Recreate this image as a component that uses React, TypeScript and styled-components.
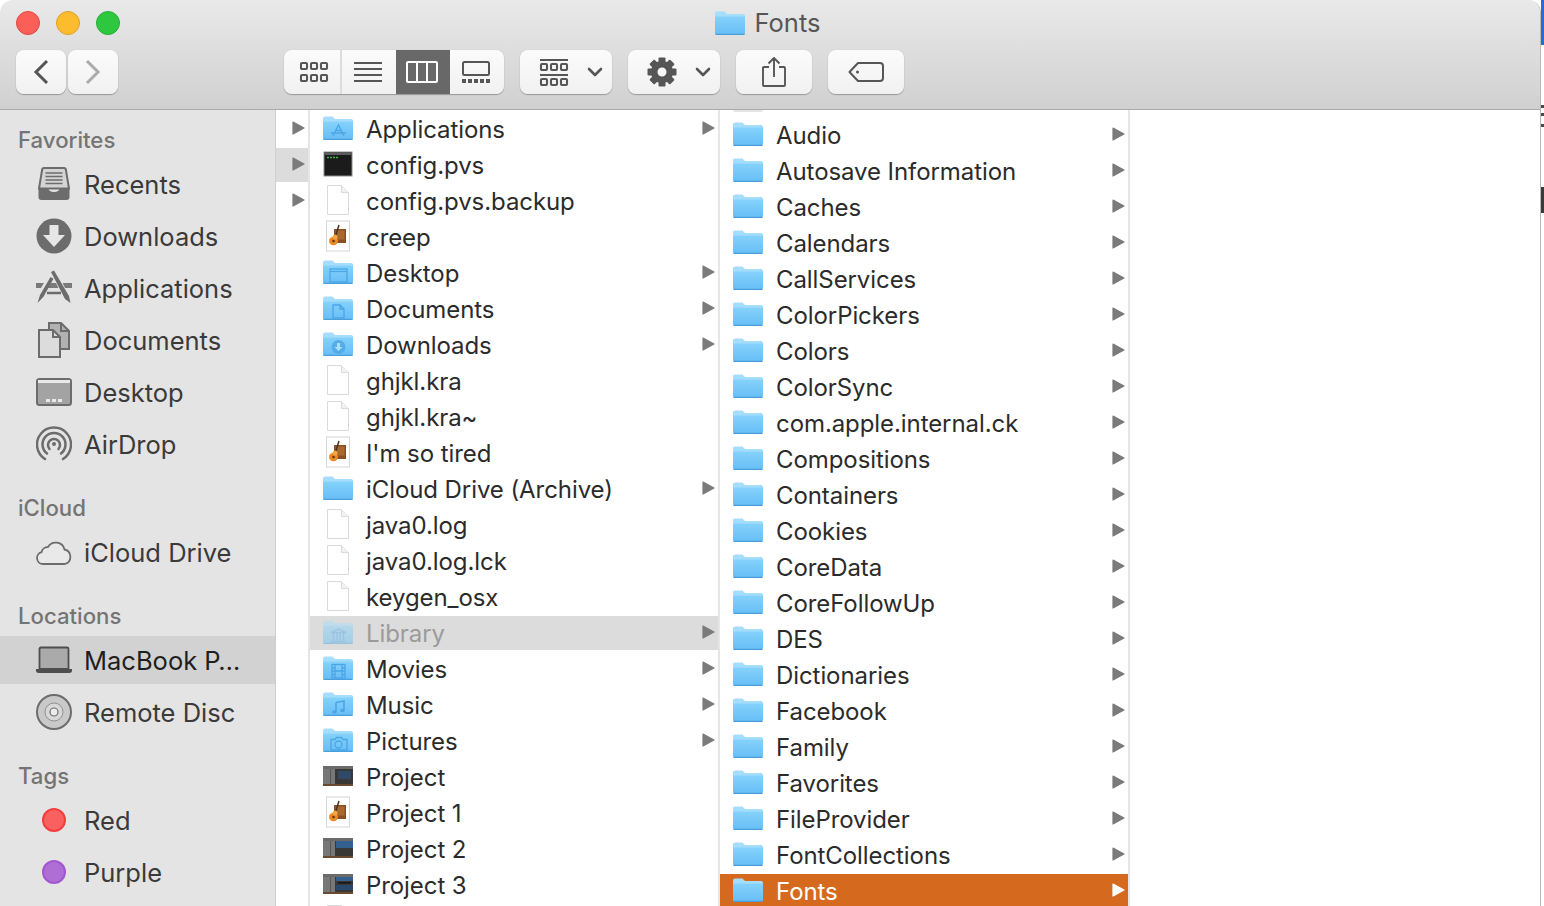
import React from "react";
import styled, { createGlobalStyle } from "styled-components";

const Global = createGlobalStyle`
  html, body { margin: 0; padding: 0; background: #fff; overflow: hidden; }
  * { box-sizing: border-box; }
  body { font-family: Inter, "Noto Sans", "Liberation Sans", sans-serif; }
`;

const Screen = styled.div`
  display: flex;
  width: 1544px;
  height: 906px;
  overflow: hidden;
`;
const Window = styled.div`
  width: 1541px;
  height: 906px;
  display: flex;
  flex-direction: column;
  border-radius: 13px 13px 0 0;
  border-right: 1px solid #b9b9b9;
  overflow: hidden;
`;
const DesktopStrip = styled.div`
  width: 3px;
  display: flex;
  flex-direction: column;
`;
const StripBit = styled.div<{ $h: number; $c: string }>`
  height: ${(p) => p.$h}px;
  background: ${(p) => p.$c};
`;

const Chrome = styled.header`
  height: 110px;
  flex: none;
  background: linear-gradient(#e9e9e9, #d0d0d0);
  border-bottom: 1px solid #ababab;
`;
const TitleRow = styled.div`
  height: 49px;
  display: grid;
  grid-template-columns: 1fr auto 1fr;
  align-items: center;
  padding: 0 16px;
`;
const Lights = styled.div`
  display: flex;
  gap: 16px;
  margin-bottom: 4px;
`;
const Light = styled.span<{ $bg: string; $bd: string }>`
  width: 24px;
  height: 24px;
  border-radius: 50%;
  background: ${(p) => p.$bg};
  border: 1px solid ${(p) => p.$bd};
`;
const Title = styled.div`
  display: flex;
  align-items: center;
  gap: 10px;
  margin: 0 5px 4px 0;
  font-size: 25.5px;
  color: #565656;
`;
const Toolbar = styled.div`
  height: 46px;
  display: flex;
  align-items: center;
  padding-left: 16px;
`;
const Tool = styled.div<{ $w: number; $ml?: number; $pl?: number }>`
  width: ${(p) => p.$w}px;
  height: 44px;
  margin-left: ${(p) => p.$ml ?? 0}px;
  padding-left: ${(p) => p.$pl ?? 0}px;
  flex: none;
  display: flex;
  align-items: center;
  justify-content: center;
  border-radius: 8px;
  background: linear-gradient(#fbfbfb, #f1f1f1);
  box-shadow: 0 1px 1px rgba(0, 0, 0, 0.28), 0 0 1px rgba(0, 0, 0, 0.18);
  color: #565656;
`;
const Segmented = styled(Tool)`
  overflow: hidden;
  justify-content: flex-start;
`;
const Seg = styled.div<{ $w: number; $on?: boolean; $line?: boolean; $pl?: number; $pr?: number }>`
  width: ${(p) => p.$w}px;
  height: 100%;
  padding: 0 ${(p) => p.$pr ?? 0}px 0 ${(p) => p.$pl ?? 0}px;
  display: flex;
  align-items: center;
  justify-content: center;
  background: ${(p) => (p.$on ? "#686868" : "transparent")};
  color: ${(p) => (p.$on ? "#fff" : "#565656")};
  border-right: ${(p) => (p.$line ? "2px solid #dcdcdc" : "none")};
`;
const ToolGap = styled.span`
  width: 18px;
  flex: none;
`;

const Body = styled.main`
  flex: 1;
  min-height: 0;
  display: flex;
  background: #fff;
`;
const Sidebar = styled.nav`
  width: 276px;
  flex: none;
  padding-top: 11px;
  background: #e4e4e4;
  border-right: 1px solid #cfcfcf;
  display: flex;
  flex-direction: column;
  gap: 17px;
`;
const Section = styled.section``;
const SectionTitle = styled.h2`
  margin: 0;
  height: 39px;
  line-height: 38px;
  padding-left: 18px;
  font-size: 22.2px;
  font-weight: 500;
  color: #747474;
`;
const SideRow = styled.div<{ $on?: boolean }>`
  height: 48px;
  margin-bottom: 4px;
  display: flex;
  align-items: center;
  gap: 12px;
  padding-left: 36px;
  font-size: 25.5px;
  color: ${(p) => (p.$on ? "#1f1f1f" : "#3a3a3a")};
  background: ${(p) => (p.$on ? "#d2d2d2" : "transparent")};
  white-space: nowrap;
`;
const Dot = styled.span<{ $bg: string; $bd: string }>`
  width: 24px;
  height: 24px;
  margin: 0 6px;
  border-radius: 50%;
  background: ${(p) => p.$bg};
  border: 2px solid ${(p) => p.$bd};
  flex: none;
`;

const Column = styled.div<{ $w: number; $top?: number }>`
  width: ${(p) => p.$w}px;
  flex: none;
  padding-top: ${(p) => p.$top ?? 0}px;
  border-right: 2px solid #e6e6e6;
  overflow: hidden;
`;
const Filler = styled.div`
  flex: 1;
`;
const Sliver = styled.div`
  width: 30px;
  height: 2px;
  margin: -6px 0 4px 13px;
  background: #e4e4e4;
  border-radius: 0 0 2px 2px;
`;
const ArrowRow = styled.div<{ $on?: boolean }>`
  height: 36px;
  border-top: 2px solid #fff;
  background: ${(p) => (p.$on ? "#dcdcdc" : "transparent")};
  display: flex;
  align-items: center;
  justify-content: flex-end;
  padding: 0 3px 2px 0;
  color: #7b7b7b;
`;
const Row = styled.div<{ $state?: "dim" | "active" }>`
  height: 36px;
  border-top: 2px solid #fff;
  display: flex;
  align-items: center;
  padding: 0 3px 0 13px;
  font-size: 24px;
  letter-spacing: -0.08px;
  white-space: nowrap;
  background: ${(p) =>
    p.$state === "dim" ? "#dcdcdc" : p.$state === "active" ? "#d56a1f" : "transparent"};
  color: ${(p) =>
    p.$state === "dim" ? "#9b9b9b" : p.$state === "active" ? "#fff" : "#2b2b2b"};
`;
const RowIcon = styled.span<{ $dim?: boolean }>`
  width: 32px;
  height: 30px;
  margin-right: 11px;
  margin-top: -2px;
  flex: none;
  display: flex;
  align-items: center;
  opacity: ${(p) => (p.$dim ? 0.45 : 1)};
`;
const RowName = styled.span`
  flex: 1;
  padding-top: 1px;
`;
const RowArrow = styled.span<{ $state?: "dim" | "active" }>`
  display: flex;
  margin-bottom: 3px;
  color: ${(p) => (p.$state === "active" ? "#fff" : "#7b7b7b")};
`;
const ThumbSvg = styled.svg`
  filter: blur(0.7px);
`;
const SideSvg = styled.svg`
  flex: none;
`;

const Arrow = () => (
  <svg width="13" height="14" viewBox="0 0 13 14">
    <path d="M1 1 12 7 1 13Z" fill="currentColor" stroke="currentColor" strokeWidth="1.2" strokeLinejoin="round" />
  </svg>
);

type Glyph = "apps" | "window" | "doc" | "down" | "library" | "film" | "music" | "camera";

const FolderGlyph = ({ g }: { g: Glyph }) => {
  const c = "#4aa6e6";
  const s = { fill: "none", stroke: c, strokeWidth: 1.3 };
  switch (g) {
    case "apps":
      return (
        <g {...s}>
          <path d="M10 20 15.5 9 21 20M8 17h15M12 14.5h7" />
        </g>
      );
    case "window":
      return (
        <g {...s}>
          <rect x="7" y="9" width="17" height="13" />
          <path d="M7 11.5h17" />
        </g>
      );
    case "doc":
      return (
        <g {...s}>
          <path d="M10 9h7l4 4v9H10ZM17 9v4h4" />
        </g>
      );
    case "down":
      return (
        <g>
          <circle cx="15.5" cy="15" r="7" fill={c} opacity="0.8" />
          <path d="M14 11h3v4h2.5l-4 4-4-4H14Z" fill="#a9dffc" />
        </g>
      );
    case "library":
      return (
        <g {...s}>
          <path d="M8 12.5 15.5 9 23 12.5ZM8 21.5h15M10.5 13v7M14 13v7M17 13v7M20.5 13v7" />
        </g>
      );
    case "film":
      return (
        <g {...s}>
          <rect x="9" y="8.5" width="13" height="13.5" />
          <path d="M12 8.5v13.5M19 8.5v13.5M9 12h3M9 15h3M9 18.500h3M19 12h3M19 15h3M19 18.500h3M12 15h7" />
        </g>
      );
    case "music":
      return (
        <g>
          <path d="M13 10.500 21 9v9" fill="none" stroke={c} strokeWidth="1.6" />
          <path d="M13 10.500V20" fill="none" stroke={c} strokeWidth="1.6" />
          <ellipse cx="11.500" cy="20" rx="2.300" ry="1.800" fill={c} />
          <ellipse cx="19.500" cy="18.500" rx="2.300" ry="1.800" fill={c} />
        </g>
      );
    case "camera":
      return (
        <g {...s}>
          <path d="M8 11.500h4l1.500-2h5l1.500 2h4v10.500H8Z" />
          <circle cx="15.500" cy="16.500" r="3.500" />
        </g>
      );
  }
};

const Folder = ({ g, w = 30, h = 24, id }: { g?: Glyph; w?: number; h?: number; id: string }) => (
  <svg width={w} height={h} viewBox="0 0 30 24">
    <defs>
      <linearGradient id={id} x1="0" y1="0" x2="0" y2="1">
        <stop offset="0" stopColor="#85d2fb" />
        <stop offset="1" stopColor="#66bdf6" />
      </linearGradient>
    </defs>
    <path d="M0 2.500Q0 .5 2 .5h7.500l2.500 2.500h16q2 0 2 2v4H0Z" fill="#a5defc" />
    <path d="M0 5.500h30V22q0 2-2 2H2q-2 0-2-2Z" fill={`url(#${id})`} />
    <path d="M0 22.500q0 1.500 2 1.500h26q2 0 2-1.500V22.800H0Z" fill="#4a9fdb" />
    {g && <FolderGlyph g={g} />}
  </svg>
);

const FilePage = () => (
  <svg width="30" height="32" viewBox="0 0 30 32">
    <path d="M4.500 1.500h14l7 7v22h-21Z" fill="#fff" stroke="#dadada" />
    <path d="M18.500 1.500v7h7" fill="#f2f2f2" stroke="#dadada" />
  </svg>
);

const Garage = () => (
  <svg width="30" height="32" viewBox="0 0 30 32">
    <rect x="3.500" y="1" width="23" height="30" fill="#fff" stroke="#d6d6d6" />
    <rect x="11" y="9" width="12" height="14" fill="#8a4f24" />
    <rect x="12.500" y="10.500" width="9" height="9" fill="#a9682f" />
    <path d="M16 5 12.500 16" stroke="#4a3020" strokeWidth="1.500" />
    <ellipse cx="10.500" cy="21" rx="4.500" ry="4.200" fill="#e98a24" />
    <ellipse cx="12" cy="17" rx="2.500" ry="2.500" fill="#f2a93a" />
    <circle cx="10.500" cy="21" r="1.300" fill="#6a3510" />
  </svg>
);

const TermDoc = () => (
  <svg width="30" height="26" viewBox="0 0 30 26">
    <rect x="1" y="1" width="28" height="24" fill="#1b1b1b" stroke="#8d8d8d" />
    <rect x="1.500" y="1.500" width="27" height="2.500" fill="#5c5c5c" />
    <path d="M4 6.500h2M7 6.500h2M10 6.500h2M13 6.500h2" stroke="#3fae4c" strokeWidth="1.500" />
  </svg>
);

const Thumb = ({ v }: { v: number }) => (
  <ThumbSvg width="30" height="22" viewBox="0 0 30 22">
    <rect x="0" y="1" width="30" height="20" fill="#3a3836" />
    <rect x="0" y="1" width="30" height="3" fill="#6b6b6b" />
    <rect x="0" y="4" width="12" height="15" fill="#777" />
    <rect x="7" y="4" width="1" height="15" fill="#555" />
    {v === 0 && <rect x="15" y="6" width="13" height="8" fill="#2e4a68" />}
    {v === 1 && <rect x="13" y="4" width="17" height="7" fill="#34608f" />}
    {v === 2 && (
      <>
        <rect x="13" y="4" width="17" height="4" fill="#34608f" />
        <rect x="13" y="12" width="17" height="5" fill="#27486c" />
        <rect x="15" y="9" width="13" height="1.500" fill="#141414" />
      </>
    )}
    <rect x="0" y="19" width="30" height="2" fill="#6a4a30" />
  </ThumbSvg>
);

type Kind = Glyph | "plain" | "file" | "garage" | "term" | "t0" | "t1" | "t2";
const col2: { n: string; k: Kind; a?: boolean; dim?: boolean }[] = [
  { n: "Applications", k: "apps", a: true },
  { n: "config.pvs", k: "term" },
  { n: "config.pvs.backup", k: "file" },
  { n: "creep", k: "garage" },
  { n: "Desktop", k: "window", a: true },
  { n: "Documents", k: "doc", a: true },
  { n: "Downloads", k: "down", a: true },
  { n: "ghjkl.kra", k: "file" },
  { n: "ghjkl.kra~", k: "file" },
  { n: "I'm so tired", k: "garage" },
  { n: "iCloud Drive (Archive)", k: "plain", a: true },
  { n: "java0.log", k: "file" },
  { n: "java0.log.lck", k: "file" },
  { n: "keygen_osx", k: "file" },
  { n: "Library", k: "library", a: true, dim: true },
  { n: "Movies", k: "film", a: true },
  { n: "Music", k: "music", a: true },
  { n: "Pictures", k: "camera", a: true },
  { n: "Project", k: "t0" },
  { n: "Project 1", k: "garage" },
  { n: "Project 2", k: "t1" },
  { n: "Project 3", k: "t2" },
  { n: "", k: "file" },
];
const col3 = [
  "Audio", "Autosave Information", "Caches", "Calendars", "CallServices", "ColorPickers",
  "Colors", "ColorSync", "com.apple.internal.ck", "Compositions", "Containers", "Cookies",
  "CoreData", "CoreFollowUp", "DES", "Dictionaries", "Facebook", "Family", "Favorites",
  "FileProvider", "FontCollections", "Fonts",
];

const KindIcon = ({ k, id }: { k: Kind; id: string }) => {
  if (k === "file") return <FilePage />;
  if (k === "garage") return <Garage />;
  if (k === "term") return <TermDoc />;
  if (k === "t0") return <Thumb v={0} />;
  if (k === "t1") return <Thumb v={1} />;
  if (k === "t2") return <Thumb v={2} />;
  if (k === "plain") return <Folder id={id} />;
  return <Folder g={k} id={id} />;
};

const SideIcon = ({ children }: { children: React.ReactNode }) => (
  <SideSvg width="36" height="36" viewBox="0 0 36 36">
    {children}
  </SideSvg>
);

const Recents = () => (
  <SideIcon>
    <path d="M6 4.500Q6 2 8 2h20q2 0 2 2.500l3 18H3Z" fill="#d4d4d4" stroke="#6c6c6c" strokeWidth="2" />
    <path d="M9.500 7h17M9.500 10.500h17M9.500 14h17M9.500 17.500h17" stroke="#6c6c6c" strokeWidth="1.500" />
    <path d="M2.500 22H12q1 4 6 4t6-4h9.500v9q0 3-3 3h-25q-3 0-3-3Z" fill="#6c6c6c" />
  </SideIcon>
);
const Downloads = () => (
  <SideIcon>
    <circle cx="18" cy="18" r="17.500" fill="#6c6c6c" />
    <path d="M13.500 7h9v10h6.500L18 29 7 17h6.500Z" fill="#e6e6e6" />
  </SideIcon>
);
const AppsIcon = () => (
  <SideIcon>
    <path d="M0 13h36v5H0Z" fill="#7a7a7a" />
    <path d="M3 27 15 7M33 33 17.500 1" stroke="#e4e4e4" strokeWidth="6" fill="none" />
    <path d="M1.500 33 4 25 14.500 7l3 1.800-10 18Z" fill="#6c6c6c" />
    <path d="M34.500 33l-5.500-4L15 2l3-1.500L33 26Z" fill="#6c6c6c" />
    <path d="M11 23h14" stroke="#6c6c6c" strokeWidth="2.500" />
  </SideIcon>
);
const DocsIcon = () => (
  <SideIcon>
    <path d="M13 1h12l8 8v18H13Z" fill="#b2b2b2" stroke="#6c6c6c" strokeWidth="2" />
    <path d="M3 8h14l7 7v20H3Z" fill="#dcdcdc" stroke="#6c6c6c" strokeWidth="2" />
    <path d="M13 1v8M25 1v8h8M17 8v7h7" fill="none" stroke="#6c6c6c" strokeWidth="2" />
  </SideIcon>
);
const DesktopIcon = () => (
  <SideIcon>
    <rect x="1" y="5" width="34" height="26" rx="2.500" fill="#a3a3a3" stroke="#6c6c6c" strokeWidth="2" />
    <rect x="2" y="6" width="32" height="3" fill="#e9e9e9" />
    <path d="M10 28v-3h4v3ZM16 28v-3h4v3ZM22 28v-3h4v3Z" fill="#e9e9e9" />
  </SideIcon>
);
const AirDrop = () => (
  <SideIcon>
    <g fill="none" stroke="#6c6c6c" strokeWidth="2.500" strokeLinecap="round">
      <path d="M9 33a17 17 0 1 1 18 0" />
      <path d="M11 27.500a11.500 11.500 0 1 1 14 0" />
      <path d="M13.500 23a6 6 0 1 1 9 0" />
    </g>
    <circle cx="18" cy="18" r="2" fill="#6c6c6c" />
  </SideIcon>
);
const Cloud = () => (
  <SideIcon>
    <path
      d="M7 30a6 6 0 0 1-1.500-11.800A6.500 6.500 0 0 1 12 13A9 9 0 0 1 28.500 15.500A7.500 7.500 0 0 1 29 30Z"
      fill="#e9e9e9"
      stroke="#6c6c6c"
      strokeWidth="1.800"
      strokeLinejoin="round"
    />
  </SideIcon>
);
const Laptop = () => (
  <SideIcon>
    <path d="M3.500 7q0-1.500 1.500-1.500h26q1.500 0 1.500 1.500v20h-29Z" fill="#aaa" stroke="#4e4e4e" strokeWidth="1.800" />
    <path d="M0 27h36v1.500q0 2.500-3 2.500H3q-3 0-3-2.500Z" fill="#4e4e4e" />
  </SideIcon>
);
const Disc = () => (
  <SideIcon>
    <circle cx="18" cy="18" r="17" fill="#c9c9c9" stroke="#6c6c6c" strokeWidth="2" />
    <circle cx="18" cy="18" r="9" fill="#d8d8d8" stroke="#909090" />
    <circle cx="18" cy="18" r="4" fill="#ececec" stroke="#6c6c6c" strokeWidth="1.200" />
  </SideIcon>
);

const GridIcon = () => (
  <svg width="30" height="28" viewBox="0 0 30 28" fill="none" stroke="currentColor" strokeWidth="2.100">
    {[2, 12, 22].map((x) =>
      [5, 17].map((y) => <rect key={`${x}-${y}`} x={x} y={y} width="6" height="6" rx="1" />),
    )}
  </svg>
);
const ArrangeIcon = () => (
  <svg width="30" height="30" viewBox="0 0 30 30" fill="none" stroke="currentColor">
    <path d="M1 3h28M1 18h28" strokeWidth="1.800" />
    <g strokeWidth="2.100">
      {[2, 12, 22].map((x) =>
        [7, 22].map((y) => <rect key={`${x}-${y}`} x={x} y={y} width="6" height="6" rx="1" />),
      )}
    </g>
  </svg>
);
const ListIcon = () => (
  <svg width="30" height="22" viewBox="0 0 30 22" stroke="currentColor" strokeWidth="2">
    <path d="M1 2h28M1 8h28M1 14h28M1 20h28" />
  </svg>
);
const ColumnsIcon = () => (
  <svg width="32" height="22" viewBox="0 0 32 22" fill="none" stroke="currentColor" strokeWidth="2">
    <rect x="1" y="1" width="30" height="20" rx="1" />
    <path d="M11 1v20M21 1v20" />
  </svg>
);
const GalleryIcon = () => (
  <svg width="28" height="22" viewBox="0 0 28 22">
    <rect x="1" y="1" width="26" height="13" rx="1.500" fill="none" stroke="currentColor" strokeWidth="2" />
    {[0, 6, 12, 18, 24].map((x) => (
      <rect key={x} x={x} y="18" width="4" height="4" fill="currentColor" />
    ))}
  </svg>
);
const Chevron = () => (
  <svg width="16" height="10" viewBox="0 0 16 10" fill="none" stroke="currentColor" strokeWidth="2.600" strokeLinecap="round" strokeLinejoin="round">
    <path d="M2 2l6 6 6-6" />
  </svg>
);
const Gear = () => (
  <svg width="30" height="30" viewBox="0 0 30 30" fill="currentColor">
    {[0, 45, 90, 135, 180, 225, 270, 315].map((a) => (
      <rect key={a} x="11.500" y="0.500" width="7" height="7" rx="1" transform={`rotate(${a} 15 15)`} />
    ))}
    <path fillRule="evenodd" d="M15 4a11 11 0 1 1 0 22 11 11 0 0 1 0-22Zm0 6.500a4.500 4.500 0 1 0 0 9 4.500 4.500 0 0 0 0-9Z" />
  </svg>
);
const Share = () => (
  <svg width="24" height="32" viewBox="0 0 24 32" fill="none" stroke="currentColor" strokeWidth="1.900" strokeLinejoin="round">
    <path d="M7 11H2q-1 0-1 1v17q0 1 1 1h20q1 0 1-1V12q0-1-1-1h-5M12 21V2M6.500 7.500 12 2l5.500 5.500" />
  </svg>
);
const TagIcon = () => (
  <svg width="36" height="22" viewBox="0 0 36 22" fill="none" stroke="currentColor" strokeWidth="2">
    <path d="M10 2h22q3 0 3 3v12q0 3-3 3H10L1.500 11Z" strokeLinejoin="round" />
    <circle cx="9.500" cy="11" r="1.500" fill="currentColor" stroke="none" />
  </svg>
);
const Back = ({ flip }: { flip?: boolean }) => (
  <svg width="16" height="26" viewBox="0 0 16 26" fill="none" stroke={flip ? "#ababab" : "#555"} strokeWidth="3">
    <path d={flip ? "M2 2l11 11L2 24" : "M14 2 3 13l11 11"} />
  </svg>
);

const sidebar = [
  {
    title: "Favorites",
    rows: [
      ["Recents", <Recents key="r" />],
      ["Downloads", <Downloads key="d" />],
      ["Applications", <AppsIcon key="a" />],
      ["Documents", <DocsIcon key="o" />],
      ["Desktop", <DesktopIcon key="k" />],
      ["AirDrop", <AirDrop key="i" />],
    ],
  },
  { title: "iCloud", rows: [["iCloud Drive", <Cloud key="c" />]] },
  {
    title: "Locations",
    rows: [
      ["MacBook P…", <Laptop key="l" />, true],
      ["Remote Disc", <Disc key="s" />],
    ],
  },
  {
    title: "Tags",
    rows: [
      ["Red", <Dot key="t1" $bg="#fb6060" $bd="#f43d3d" />],
      ["Purple", <Dot key="t2" $bg="#ad6fd6" $bd="#a456d0" />],
    ],
  },
] as { title: string; rows: [string, React.ReactNode, boolean?][] }[];

export default function App() {
  return (
    <Screen>
      <Global />
      <Window>
        <Chrome>
          <TitleRow>
            <Lights>
              <Light $bg="#fc5f57" $bd="#e2463f" />
              <Light $bg="#fdbc2e" $bd="#e0a028" />
              <Light $bg="#2ec840" $bd="#26ac36" />
            </Lights>
            <Title>
              <Folder id="title-folder" />
              Fonts
            </Title>
          </TitleRow>
          <Toolbar>
            <Tool $w={50}><Back /></Tool>
            <Tool $w={50} $ml={2}><Back flip /></Tool>
            <Segmented $w={220} $ml={166}>
              <Seg $w={58} $line $pl={4}><GridIcon /></Seg>
              <Seg $w={54} $pr={2}><ListIcon /></Seg>
              <Seg $w={54} $on $pr={2}><ColumnsIcon /></Seg>
              <Seg $w={54} $pr={3}><GalleryIcon /></Seg>
            </Segmented>
            <Tool $w={92} $ml={16} $pl={9}>
              <ArrangeIcon />
              <ToolGap />
              <Chevron />
            </Tool>
            <Tool $w={92} $ml={16} $pl={9}>
              <Gear />
              <ToolGap />
              <Chevron />
            </Tool>
            <Tool $w={76} $ml={16}><Share /></Tool>
            <Tool $w={76} $ml={16}><TagIcon /></Tool>
          </Toolbar>
        </Chrome>
        <Body>
          <Sidebar>
            {sidebar.map((s) => (
              <Section key={s.title}>
                <SectionTitle>{s.title}</SectionTitle>
                {s.rows.map(([name, icon, on]) => (
                  <SideRow key={name} $on={on}>
                    {icon}
                    {name}
                  </SideRow>
                ))}
              </Section>
            ))}
          </Sidebar>
          <Column $w={34}>
            <ArrowRow><Arrow /></ArrowRow>
            <ArrowRow $on><Arrow /></ArrowRow>
            <ArrowRow><Arrow /></ArrowRow>
          </Column>
          <Column $w={410}>
            {col2.map((r, i) => {
              const state = r.dim ? "dim" : undefined;
              return (
                <Row key={i} $state={state}>
                  <RowIcon $dim={r.dim}><KindIcon k={r.k} id={`f2-${i}`} /></RowIcon>
                  <RowName>{r.n}</RowName>
                  {r.a && <RowArrow $state={state}><Arrow /></RowArrow>}
                </Row>
              );
            })}
          </Column>
          <Column $w={410} $top={6}>
            <Sliver />
            {col3.map((n, i) => {
              const state = n === "Fonts" ? "active" : undefined;
              return (
                <Row key={n} $state={state}>
                  <RowIcon><Folder id={`f3-${i}`} /></RowIcon>
                  <RowName>{n}</RowName>
                  <RowArrow $state={state}><Arrow /></RowArrow>
                </Row>
              );
            })}
          </Column>
          <Filler />
        </Body>
      </Window>
      <DesktopStrip>
        <StripBit $h={45} $c="#1f6fd6" />
        <StripBit $h={60} $c="#ffffff" />
        <StripBit $h={3} $c="#4a4a4a" />
        <StripBit $h={5} $c="#ffffff" />
        <StripBit $h={3} $c="#4a4a4a" />
        <StripBit $h={8} $c="#ffffff" />
        <StripBit $h={3} $c="#4a4a4a" />
        <StripBit $h={60} $c="#ffffff" />
        <StripBit $h={26} $c="#3a3a3a" />
      </DesktopStrip>
    </Screen>
  );
}
